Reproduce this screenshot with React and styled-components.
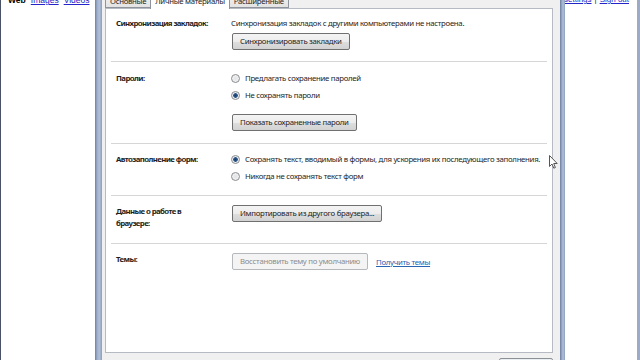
import React from 'react'
import styled, { createGlobalStyle } from 'styled-components'

const GlobalStyle = createGlobalStyle`
  html, body {
    margin: 0;
    padding: 0;
    background: #fff;
  }
  body {
    font-family: 'Noto Sans', 'Open Sans', sans-serif;
  }
`

const Screen = styled.div`
  position: relative;
  width: 640px;
  height: 360px;
  overflow: hidden;
  display: flex;
  font-size: 7.8px;
  letter-spacing: -0.3px;
  color: #1e1e1e;
`

const Backdrop = styled.div`
  flex: none;
  width: ${p => p.$width}px;
  box-sizing: border-box;
  background: #fff;
  overflow: hidden;
  display: flex;
  align-items: flex-start;
  justify-content: ${p => (p.$right ? 'flex-end' : 'flex-start')};
  border-left: ${p => (p.$right ? 'none' : '1px solid #4a5366')};
  border-right: ${p => (p.$right ? '3px solid #9eabc6' : 'none')};
`

const TopLinks = styled.div`
  display: flex;
  gap: ${p => (p.$right ? 3 : 5)}px;
  margin-top: -5px;
  padding: 0 ${p => (p.$right ? '8px' : '0')} 0 ${p => (p.$right ? '0' : '7px')};
  white-space: nowrap;
  font-family: 'Liberation Sans', Arial, sans-serif;
  font-size: ${p => (p.$right ? 8 : 8.5)}px;
  letter-spacing: 0;
  line-height: 10px;
`

const PageLink = styled.span`
  color: ${p => (p.$plain ? '#000' : '#2424c8')};
  font-weight: ${p => (p.$plain ? 700 : 400)};
  text-decoration: ${p => (p.$plain ? 'none' : 'underline')};
`

const Frame = styled.div`
  flex: none;
  width: ${p => p.$width}px;
  background: linear-gradient(
    to right,
    #6f7f9f 0px,
    #9aabc9 2px,
    #b3c1da 60%,
    #8e9dbb 100%
  );
`

const Dialog = styled.div`
  flex: none;
  width: 458px;
  box-sizing: border-box;
  padding: 0 7px 0 3px;
  background: #f0f0f0;
  display: flex;
  flex-direction: column;
`

const Tabs = styled.div`
  display: flex;
  align-items: flex-end;
  height: 8px;
  position: relative;
  z-index: 1;
`

const Tab = styled.div`
  box-sizing: border-box;
  height: ${p => (p.$active ? 17 : 15)}px;
  margin-bottom: ${p => (p.$active ? -1 : 0)}px;
  padding: 0 4px;
  display: flex;
  align-items: flex-end;
  padding-bottom: ${p => (p.$active ? 3 : 1)}px;
  border: 1px solid #8f939b;
  border-bottom: ${p => (p.$active ? 'none' : '1px solid #8f939b')};
  margin-left: ${p => (p.$active ? -1 : 0)}px;
  margin-right: ${p => (p.$active ? -1 : 0)}px;
  background: ${p =>
    p.$active ? '#fff' : 'linear-gradient(#f2f2f2, #e3e3e3)'};
  white-space: nowrap;
  line-height: 10px;
`

const Panel = styled.div`
  flex: none;
  height: 345px;
  box-sizing: border-box;
  border: 1px solid #b6bac2;
  background: #fff;
  padding: 0 5px;
`

const Section = styled.div`
  display: grid;
  grid-template-columns: 115px 1fr;
  align-items: start;
  padding: ${p => p.$pad};
  padding-left: 5px;
  border-bottom: ${p => (p.$last ? 'none' : '1px solid #d6d6d6')};
  line-height: 12px;
`

const Label = styled.div`
  font-weight: 700;
  letter-spacing: -0.6px;
`

const Content = styled.div`
  display: flex;
  flex-direction: column;
  align-items: flex-start;
  gap: ${p => p.$gap || 0}px;
  padding-top: ${p => p.$top || 0}px;
`

const Row = styled.div`
  display: flex;
  align-items: center;
  gap: ${p => p.$gap || 5}px;
  white-space: nowrap;
`

const Radio = styled.span`
  flex: none;
  width: 9px;
  height: 9px;
  box-sizing: border-box;
  border-radius: 50%;
  border: 1px solid #8a8c8f;
  background: ${p =>
    p.$checked
      ? 'radial-gradient(circle, #1f3a66 0, #2d5a8e 2px, #e9ecef 2.6px, #f4f4f4 100%)'
      : 'radial-gradient(circle, #e2e4e6 0, #f6f6f6 100%)'};
`

const Button = styled.button`
  height: 17px;
  box-sizing: border-box;
  padding: 0 7px;
  margin-left: 1px;
  font-family: inherit;
  font-size: 7.8px;
  letter-spacing: -0.3px;
  line-height: 13px;
  white-space: nowrap;
  color: ${p => (p.disabled ? '#8c8c8c' : '#1e1e1e')};
  border: 1px solid ${p => (p.disabled ? '#b5b9bc' : '#707070')};
  border-radius: 2px;
  background: ${p =>
    p.disabled
      ? '#f4f4f4'
      : 'linear-gradient(#f4f4f4 0%, #ececec 50%, #dedede 51%, #d2d2d2 100%)'};
`

const Link = styled.span`
  color: #2a64b0;
  text-decoration: underline;
`

const Footer = styled.div`
  display: flex;
  justify-content: flex-end;
  padding-top: 5px;
`

const FooterButton = styled.div`
  width: 52px;
  height: 20px;
  border: 1px solid #8d9196;
  border-radius: 2px;
  background: linear-gradient(#e9eef3, #dfe5ea);
`

const Cursor = styled.svg`
  position: absolute;
  left: 549px;
  top: 155px;
`

export default function App() {
  return (
    <>
      <GlobalStyle />
      <Screen>
        <Backdrop $width={95}>
          <TopLinks>
            <PageLink $plain>Web</PageLink>
            <PageLink>Images</PageLink>
            <PageLink>Videos</PageLink>
          </TopLinks>
        </Backdrop>
        <Frame $width={7} />
        <Dialog>
          <Tabs>
            <Tab>Основные</Tab>
            <Tab $active>Личные материалы</Tab>
            <Tab>Расширенные</Tab>
          </Tabs>
          <Panel>
            <Section $pad="8px 0 11px">
              <Label>Синхронизация закладок:</Label>
              <Content $gap={4}>
                <span>Синхронизация закладок с другими компьютерами не настроена.</span>
                <Button>Синхронизировать закладки</Button>
              </Content>
            </Section>
            <Section $pad="10px 0 12px">
              <Label>Пароли:</Label>
              <Content $gap={5}>
                <Row>
                  <Radio />
                  <span>Предлагать сохранение паролей</span>
                </Row>
                <Row>
                  <Radio $checked />
                  <span>Не сохранять пароли</span>
                </Row>
                <Content $top={8}>
                  <Button>Показать сохраненные пароли</Button>
                </Content>
              </Content>
            </Section>
            <Section $pad="9px 0 13px">
              <Label>Автозаполнение форм:</Label>
              <Content $gap={5}>
                <Row>
                  <Radio $checked />
                  <span>
                    Сохранять текст, вводимый в формы, для ускорения их последующего заполнения.
                  </span>
                </Row>
                <Row>
                  <Radio />
                  <span>Никогда не сохранять текст форм</span>
                </Row>
              </Content>
            </Section>
            <Section $pad="9px 0 14px">
              <Label>
                Данные о работе в
                <br />
                браузере:
              </Label>
              <Content>
                <Button>Импортировать из другого браузера...</Button>
              </Content>
            </Section>
            <Section $pad="9px 0 0" $last>
              <Label>Темы:</Label>
              <Row $gap={8}>
                <Button disabled>Восстановить тему по умолчанию</Button>
                <Link>Получить темы</Link>
              </Row>
            </Section>
          </Panel>
          <Footer>
            <FooterButton />
          </Footer>
        </Dialog>
        <Frame $width={5} />
        <Backdrop $width={75} $right>
          <TopLinks $right>
            <PageLink>Search settings</PageLink>
            <span>|</span>
            <PageLink>Sign out</PageLink>
          </TopLinks>
        </Backdrop>
        <Cursor width="10" height="15" viewBox="0 0 10 15">
          <path
            d="M0.5 0.5 L0.5 11.5 L3 9 L4.8 13.2 L6.4 12.5 L4.7 8.5 L8.2 8.5 Z"
            fill="#fff"
            stroke="#555"
            strokeWidth="1"
            strokeLinejoin="round"
          />
        </Cursor>
      </Screen>
    </>
  )
}
